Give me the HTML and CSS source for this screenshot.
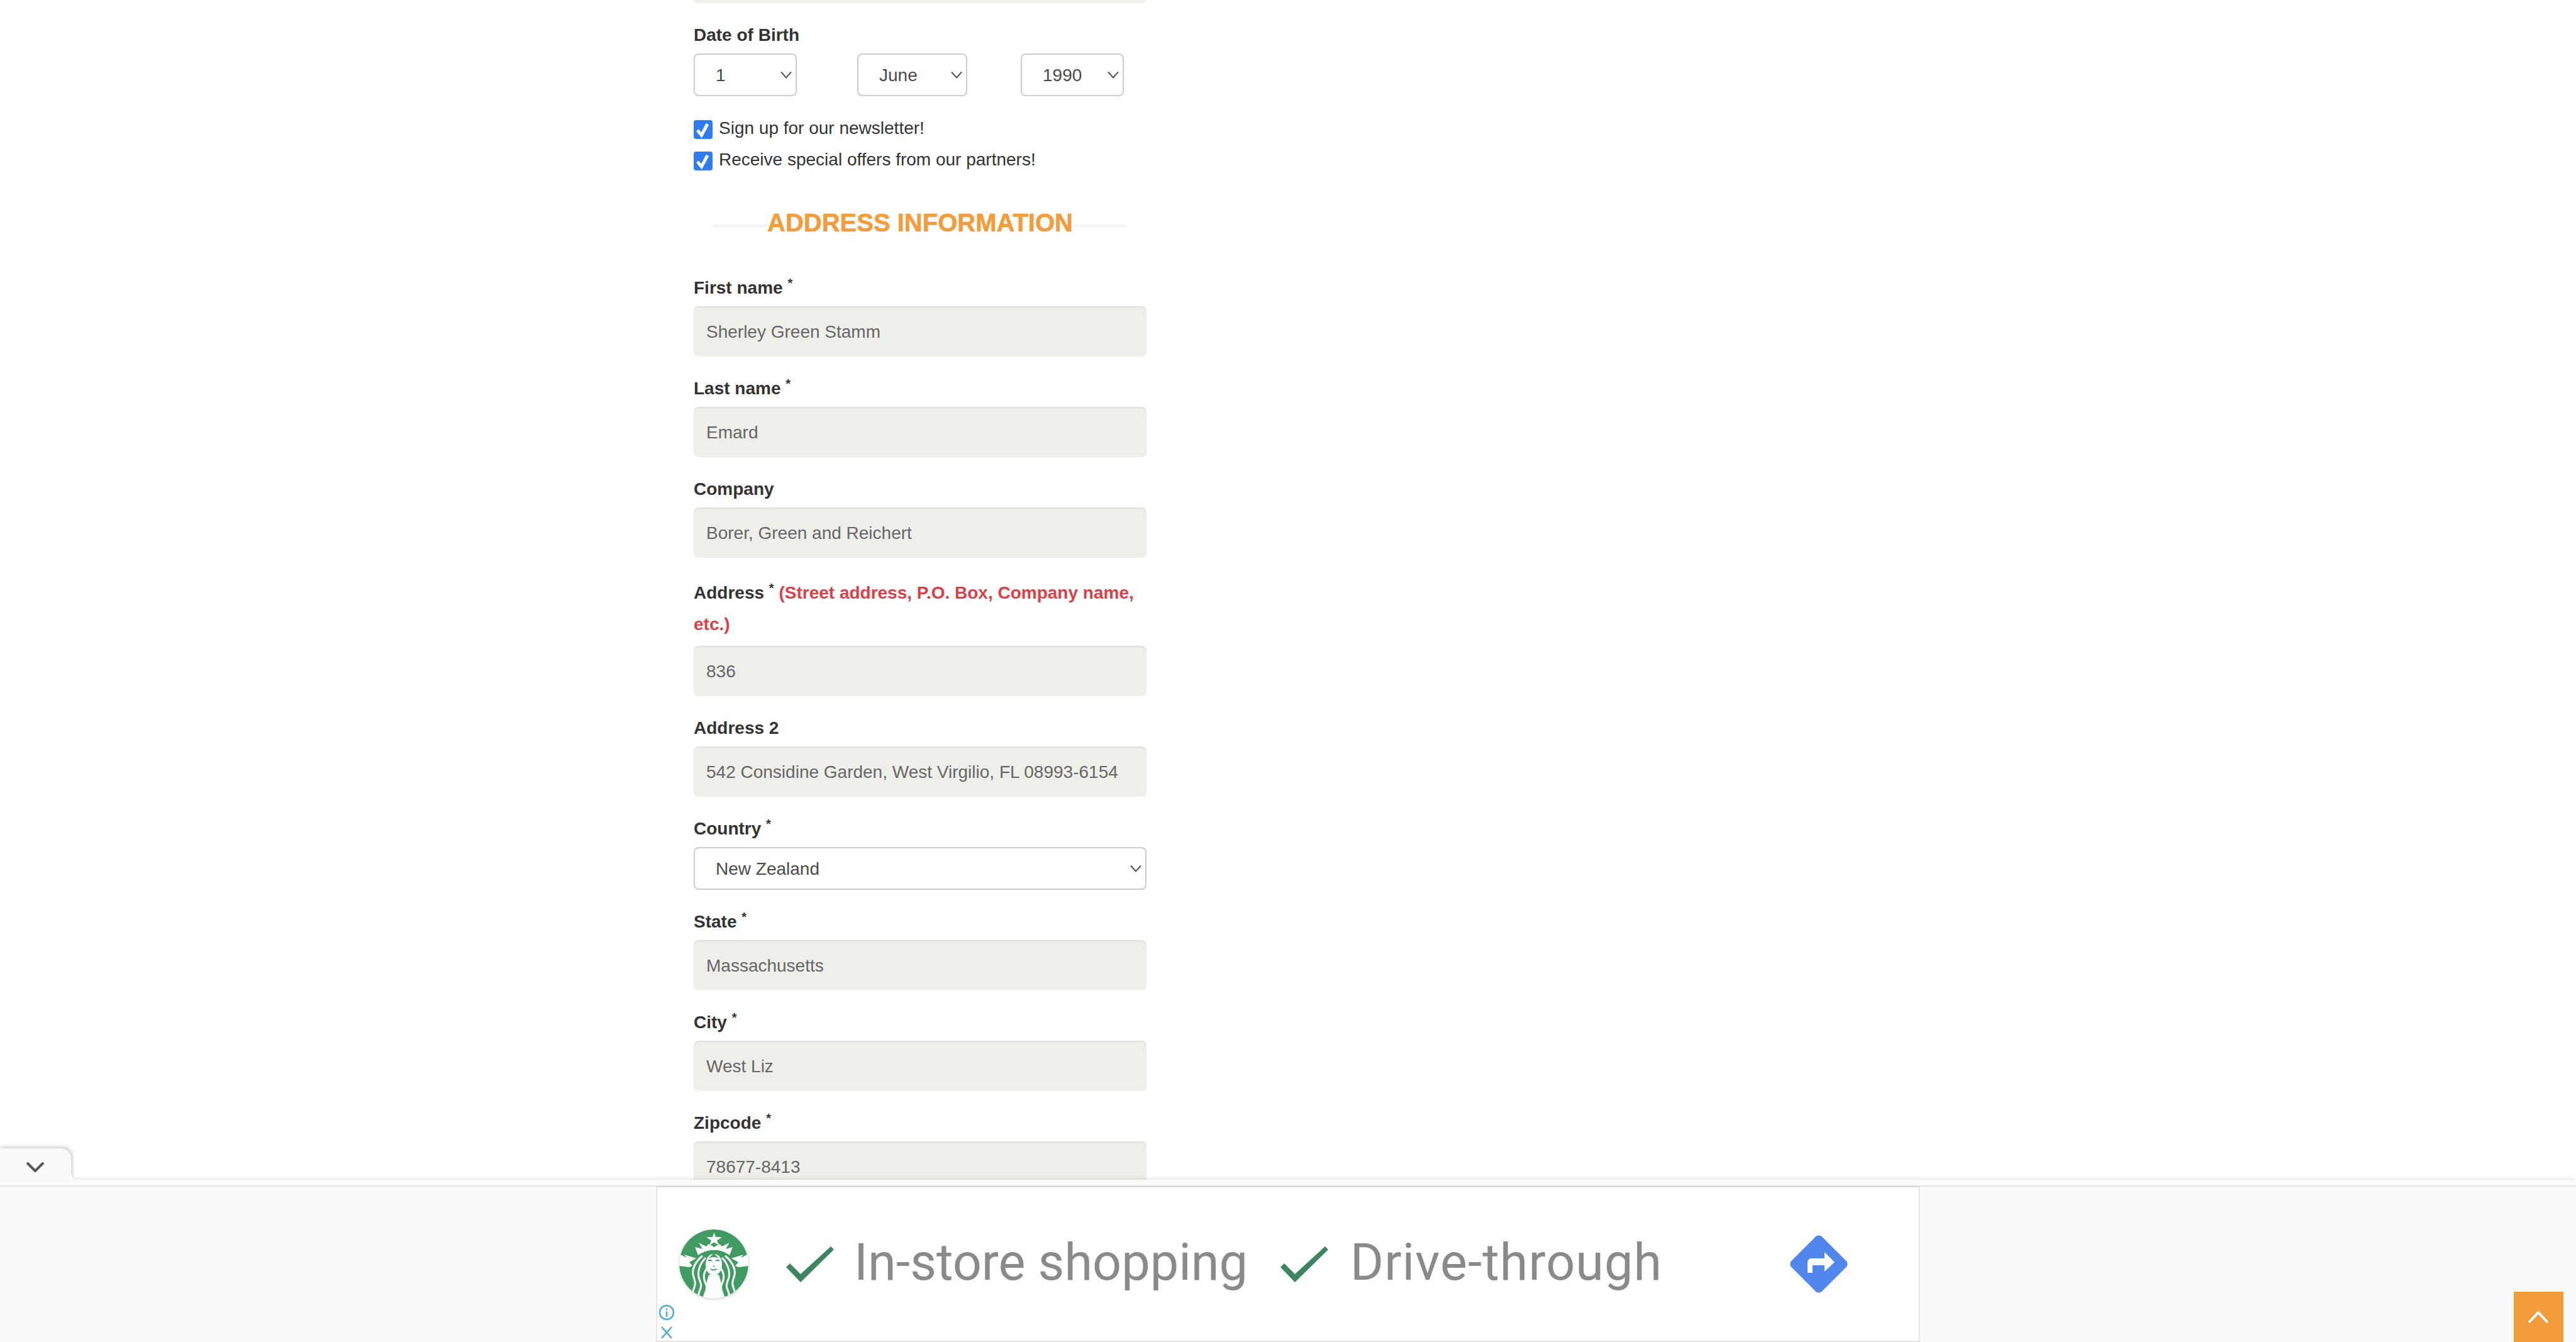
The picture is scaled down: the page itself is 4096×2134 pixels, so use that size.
FILE: index.html
```html
<!DOCTYPE html>
<html lang="en">
<head>
<meta charset="utf-8">
<title>Address information</title>
<link rel="stylesheet" href="styles.css">
</head>
<body>
<main class="form">
  <div class="input first-input"></div>
  <label class="label dob-label">Date of Birth</label>
  <div class="dob-row">
    <div class="select s-day"><span>1</span><svg class="caret" viewBox="0 0 18 12"><path d="M1 1.5 9 10.5 17 1.5"/></svg></div>
    <div class="select s-month"><span>June</span><svg class="caret" viewBox="0 0 18 12"><path d="M1 1.5 9 10.5 17 1.5"/></svg></div>
    <div class="select s-year"><span>1990</span><svg class="caret" viewBox="0 0 18 12"><path d="M1 1.5 9 10.5 17 1.5"/></svg></div>
  </div>
  <div class="check-row"><span class="check"><svg viewBox="0 0 30 30"><path d="M6 16 12.500 24 22 6"/></svg></span><span class="check-text">Sign up for our newsletter!</span></div>
  <div class="check-row"><span class="check"><svg viewBox="0 0 30 30"><path d="M6 16 12.500 24 22 6"/></svg></span><span class="check-text">Receive special offers from our partners!</span></div>
  <h2 class="heading"><span class="heading-line"></span><span class="heading-text">ADDRESS INFORMATION</span><span class="heading-line"></span></h2>
  <label class="label">First name <sup>*</sup></label>
  <input class="input" readonly value="Sherley Green Stamm">
  <label class="label">Last name <sup>*</sup></label>
  <input class="input" readonly value="Emard">
  <label class="label">Company</label>
  <input class="input" readonly value="Borer, Green and Reichert">
  <label class="label label-long">Address <sup>*</sup> <span class="hint">(Street address, P.O. Box, Company name,</span><br><span class="hint">etc.)</span></label>
  <input class="input" readonly value="836">
  <label class="label">Address 2</label>
  <input class="input" readonly value="542 Considine Garden, West Virgilio, FL 08993-6154">
  <label class="label">Country <sup>*</sup></label>
  <div class="select s-country"><span>New Zealand</span><svg class="caret" viewBox="0 0 18 12"><path d="M1 1.5 9 10.5 17 1.5"/></svg></div>
  <label class="label">State <sup>*</sup></label>
  <input class="input" readonly value="Massachusetts">
  <label class="label">City <sup>*</sup></label>
  <input class="input" readonly value="West Liz">
  <label class="label">Zipcode <sup>*</sup></label>
  <input class="input" readonly value="78677-8413">
</main>

<aside class="dock">
  <button class="dock-tab" aria-label="Collapse"><svg viewBox="0 0 30 17"><path d="M2 2 15 15 28 2"/></svg></button>
  <div class="ad">
    <svg class="logo" viewBox="0 0 110 110">
      <defs>
        <clipPath id="disc"><circle cx="55" cy="55" r="55"/></clipPath>
        <g id="side">
          <path d="M0 39 12 45 8 40 27 46 16 52 21 58 16 60 0 58Z" fill="#fff"/>
          <path d="M37 42C27 50 20 62 22 72 24 80 27 84 24 92 22 98 19 104 21 112M42 45C33 54 29 66 31 76 33 84 37 88 33 96 31 101 29 106 31 112M44 62C38 70 38 78 42 86 44 90 44 96 41 102 39 106 39 108 39 112" fill="none" stroke="#fff" stroke-width="3"/>
        </g>
      </defs>
      <circle cx="55" cy="55" r="55" fill="#fff"/>
      <g clip-path="url(#disc)">
        <circle cx="55" cy="55" r="55" fill="#3f9b62"/>
        <use href="#side"/>
        <use href="#side" transform="matrix(-1 0 0 1 110 0)"/>
        <path fill="#fff" d="M55.500 5 58 12 68 12.500 60 17.500 63 25 55.500 20.500 48 25 51 17.500 43 12.500 53 12Z"/>
        <path fill="#fff" d="M25 28 37 31 31 21 43 27 47 23 55.500 28 64 23 68 27 80 21 74 31 85 28 80 41C66 30 45 30 30 41Z"/>
        <path fill="#fff" d="M55 39C47 39 42 46 42 56 42 66 48 73 55 73 62 73 68 66 68 56 68 46 63 39 55 39Z"/>
        <path fill="#3f9b62" d="M44 50C47 45 51 42 55 38 59 42 63 45 66 50 64 46 60 44 55 44 50 44 46 46 44 50Z"/>
        <path d="M46 50Q49 48 52 50M58 50Q61 48 64 50M54 58Q55 59 56 58M50 63Q55 66 60 63" fill="none" stroke="#3f9b62" stroke-width="1.800"/>
        <path fill="#fff" d="M47 72H63L66 82 70 110H40L44 82Z"/>
      </g>
    </svg>
    <svg class="tick tick-1" viewBox="0 0 76 57"><path d="M6 27 23 44 71 0 76 5 23 57 0 33Z"/></svg>
    <span class="ad-text ad-text-1">In-store shopping</span>
    <svg class="tick tick-2" viewBox="0 0 76 57"><path d="M6 27 23 44 71 0 76 5 23 57 0 33Z"/></svg>
    <span class="ad-text ad-text-2">Drive-through</span>
    <svg class="diamond" viewBox="0 0 92 92">
      <path d="M42 1.500Q46 -0.500 50 1.500L90.500 42Q92.500 46 90.500 50L50 90.500Q46 92.500 42 90.500L1.500 50Q-0.500 46 1.500 42Z" fill="#5187ec"/>
      <path d="M28 60V44Q28 37 35 37H55V27L71 43 55 58V48H36V60Z" fill="#fff"/>
    </svg>
    <div class="ad-badges">
      <svg viewBox="0 0 26 26"><circle cx="13" cy="13" r="11"/><path d="M13 11.500V20M13 6.500V9"/></svg>
      <svg viewBox="0 0 26 26"><path d="M5 4 21 22M21 4 5 22"/></svg>
    </div>
  </div>
  <button class="to-top" aria-label="Back to top"><svg viewBox="0 0 34 20"><path d="M2 18 17 2 32 18"/></svg></button>
</aside>
</body>
</html>
```

FILE: styles.css
```css
* { box-sizing: border-box; }
html, body { margin: 0; height: 100%; }
body {
  background: #fff;
  color: #333;
  font-family: "Liberation Sans", Arial, sans-serif;
  font-size: 28px;
  overflow: hidden;
  position: relative;
}
.form {
  width: 720px;
  margin-left: 1103px;
  margin-top: -75px;
}
.input {
  display: block;
  width: 100%;
  height: 80px;
  padding: 2px 20px 0;
  border: 0;
  border-radius: 8px;
  background: #efefea;
  box-shadow: inset 0 2px 2px rgba(0, 0, 0, .07);
  color: #666;
  font: 28px "Liberation Sans", Arial, sans-serif;
  outline: 0;
}
.label {
  display: block;
  height: 50px;
  margin: 25px 0 5px;
  padding-top: 1px;
  font-weight: 700;
  line-height: 50px;
  color: #333;
}
.label sup {
  font-size: 20px;
  line-height: 0;
  vertical-align: 10px;
  font-weight: 700;
}
.label-long { height: 100px; margin: 30px 0 10px; }
.hint { color: #e13d46; }
.dob-row {
  display: grid;
  grid-template-columns: repeat(3, 260px);
  align-items: start;
  margin-bottom: 28px;
}
.select {
  position: relative;
  display: flex;
  align-items: center;
  height: 68px;
  padding: 2px 0 0 33px;
  border: 2px solid #ccc;
  border-radius: 8px;
  background: #fff;
  color: #4a4a4a;
}
.s-day, .s-year { width: 164px; }
.s-month { width: 175px; }
.s-country { width: 100%; }
.caret {
  position: absolute;
  right: 6px;
  top: 26px;
  width: 18px;
  height: 12px;
  fill: none;
  stroke: #555;
  stroke-width: 2;
}
.check-row {
  display: flex;
  align-items: center;
  gap: 10px;
  height: 50px;
  line-height: 50px;
}
.check-text { margin-top: -4px; }
.check {
  flex: none;
  width: 30px;
  height: 30px;
  border-radius: 4px;
  background: #2f7bf5;
}
.check svg { display: block; fill: none; stroke: #fff; stroke-width: 5; }
.heading {
  display: flex;
  align-items: center;
  height: 50px;
  margin: 48px 30px 53px;
  font-size: 40px;
  line-height: 50px;
  font-weight: 700;
  color: #f39c3c;
}
.heading + .label { margin-top: 0; }
.heading-line { flex: 1; height: 4px; margin-top: 10px; background: #f5f5f5; }
.heading-text { white-space: nowrap; -webkit-text-stroke: .6px #f39c3c; }
.dock {
  position: fixed;
  left: 0;
  right: 0;
  bottom: 0;
  height: 258px;
  background: #fafafa;
  box-shadow: 0 -2px 6px rgba(0, 0, 0, .1);
}
.dock::before {
  content: "";
  position: absolute;
  left: 0;
  right: 0;
  top: 9px;
  height: 2px;
  background: #e4e4e4;
}
.dock-tab {
  position: absolute;
  left: 0;
  top: -50px;
  width: 113px;
  height: 52px;
  padding: 0;
  border: 0;
  border-radius: 0 16px 0 0;
  background: #fafafa;
  box-shadow: 2px -2px 6px rgba(0, 0, 0, .22);
  clip-path: inset(-10px -24px 2px 0);
}
.dock-tab::after {
  content: "";
  position: absolute;
  left: 100%;
  bottom: 2px;
  width: 12px;
  height: 12px;
  background: radial-gradient(circle at 100% 0, transparent 11.5px, #fafafa 12.5px);
}
.dock-tab svg {
  position: absolute;
  left: 41px;
  top: 21px;
  width: 30px;
  height: 17px;
  fill: none;
  stroke: #555;
  stroke-width: 4;
}
.ad {
  position: absolute;
  left: 1043px;
  top: 10px;
  width: 2010px;
  height: 248px;
  background: #fff;
  border: 2px solid #e6e6e6;
  border-top-color: #d9d9d9;
}
.logo { position: absolute; left: 35px; top: 67px; width: 110px; height: 110px; filter: drop-shadow(0 1px 2px rgba(0, 0, 0, .2)); }
.tick { position: absolute; top: 94px; width: 76px; height: 57px; fill: #3d8560; }
.tick-1 { left: 205px; }
.tick-2 { left: 991px; }
.ad-text {
  position: absolute;
  top: 67px;
  font-family: Roboto, "Open Sans", sans-serif;
  font-size: 81px;
  line-height: 106px;
  color: #8a8a8a;
  white-space: nowrap;
}
.ad-text-1 { left: 313px; }
.ad-text-2 { left: 1102px; letter-spacing: 1px; }
.diamond { position: absolute; left: 1801px; top: 76px; width: 92px; height: 92px; }
.ad-badges { position: absolute; left: 2px; bottom: 0; display: flex; flex-direction: column; gap: 6px; }
.ad-badges svg { display: block; width: 26px; height: 26px; fill: none; stroke: #4aaed9; stroke-width: 2.500; }
.to-top {
  position: absolute;
  right: 20px;
  bottom: 0;
  width: 79px;
  height: 80px;
  padding: 0;
  border: 0;
  background: #f39c3c;
}
.to-top svg { position: absolute; left: 22px; top: 31px; width: 34px; height: 20px; fill: none; stroke: #fff; stroke-width: 4; }
```
